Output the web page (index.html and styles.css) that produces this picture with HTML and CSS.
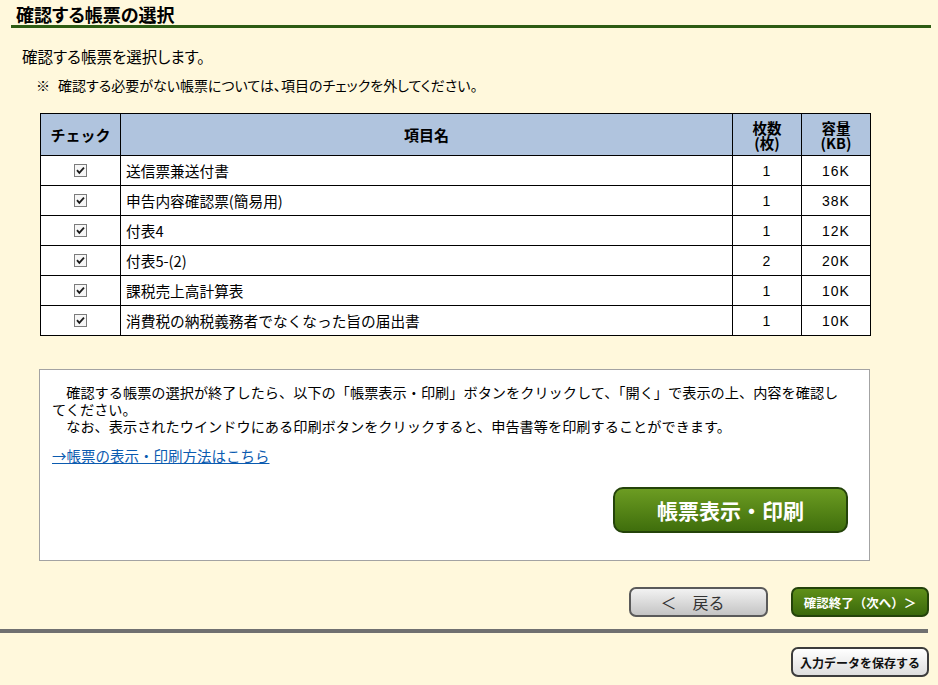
FILE: index.html
```html
<!DOCTYPE html>
<html lang="ja">
<head>
    <meta charset="UTF-8">
    <meta name="viewport" content="width=device-width, initial-scale=1.0">
    <title>確認する帳票の選択</title>
    <link rel="stylesheet" href="styles.css">
</head>
<body>
    <h1 class="page-title">確認する帳票の選択</h1>
    <p class="lead">確認する帳票を選択します。</p>
    <p class="note"><span class="mark">※</span>確認する必要がない帳票については、項目のチェックを外してください。</p>

    <table class="forms">
        <colgroup>
            <col class="col-check">
            <col class="col-name">
            <col class="col-count">
            <col class="col-size">
        </colgroup>
        <thead>
            <tr>
                <th>チェック</th>
                <th>項目名</th>
                <th class="two-line">枚数<br>(枚)</th>
                <th class="two-line">容量<br>(KB)</th>
            </tr>
        </thead>
        <tbody>
            <tr>
                <td class="check"><svg class="cb" width="13" height="13" viewBox="0 0 13 13"><rect x="0.5" y="0.5" width="12" height="12" fill="#f6f6f6" stroke="#7b7b7b"/><path d="M3 6.2 L5.3 8.8 L10 3.6" fill="none" stroke="#1a1a1a" stroke-width="1.8"/></svg></td>
                <td class="name">送信票兼送付書</td>
                <td class="num">1</td>
                <td class="num">16K</td>
            </tr>
            <tr>
                <td class="check"><svg class="cb" width="13" height="13" viewBox="0 0 13 13"><rect x="0.5" y="0.5" width="12" height="12" fill="#f6f6f6" stroke="#7b7b7b"/><path d="M3 6.2 L5.3 8.8 L10 3.6" fill="none" stroke="#1a1a1a" stroke-width="1.8"/></svg></td>
                <td class="name">申告内容確認票(簡易用)</td>
                <td class="num">1</td>
                <td class="num">38K</td>
            </tr>
            <tr>
                <td class="check"><svg class="cb" width="13" height="13" viewBox="0 0 13 13"><rect x="0.5" y="0.5" width="12" height="12" fill="#f6f6f6" stroke="#7b7b7b"/><path d="M3 6.2 L5.3 8.8 L10 3.6" fill="none" stroke="#1a1a1a" stroke-width="1.8"/></svg></td>
                <td class="name">付表4</td>
                <td class="num">1</td>
                <td class="num">12K</td>
            </tr>
            <tr>
                <td class="check"><svg class="cb" width="13" height="13" viewBox="0 0 13 13"><rect x="0.5" y="0.5" width="12" height="12" fill="#f6f6f6" stroke="#7b7b7b"/><path d="M3 6.2 L5.3 8.8 L10 3.6" fill="none" stroke="#1a1a1a" stroke-width="1.8"/></svg></td>
                <td class="name">付表5-(2)</td>
                <td class="num">2</td>
                <td class="num">20K</td>
            </tr>
            <tr>
                <td class="check"><svg class="cb" width="13" height="13" viewBox="0 0 13 13"><rect x="0.5" y="0.5" width="12" height="12" fill="#f6f6f6" stroke="#7b7b7b"/><path d="M3 6.2 L5.3 8.8 L10 3.6" fill="none" stroke="#1a1a1a" stroke-width="1.8"/></svg></td>
                <td class="name">課税売上高計算表</td>
                <td class="num">1</td>
                <td class="num">10K</td>
            </tr>
            <tr>
                <td class="check"><svg class="cb" width="13" height="13" viewBox="0 0 13 13"><rect x="0.5" y="0.5" width="12" height="12" fill="#f6f6f6" stroke="#7b7b7b"/><path d="M3 6.2 L5.3 8.8 L10 3.6" fill="none" stroke="#1a1a1a" stroke-width="1.8"/></svg></td>
                <td class="name">消費税の納税義務者でなくなった旨の届出書</td>
                <td class="num">1</td>
                <td class="num">10K</td>
            </tr>
        </tbody>
    </table>

    <div class="print-box">
        <p class="guide">　確認する帳票の選択が終了したら、以下の「帳票表示・印刷」ボタンをクリックして、「開く」で表示の上、内容を確認し<br>てください。<br>　なお、表示されたウインドウにある印刷ボタンをクリックすると、申告書等を印刷することができます。</p>
        <a href="#" class="help-link">→帳票の表示・印刷方法はこちら</a>
        <div class="print-row">
            <button class="btn-print">帳票表示・印刷</button>
        </div>
    </div>

    <div class="nav-row">
        <button class="btn-back">＜　戻る</button>
        <button class="btn-next">確認終了（次へ）＞</button>
    </div>
    <div class="rule"></div>
    <div class="save-row">
        <button class="btn-save">入力データを保存する</button>
    </div>
</body>
</html>
```
FILE: styles.css
```css
body {
    margin: 0;
    padding: 0;
    background-color: #fff8dc;
    color: #000;
    font-family: "Noto Sans CJK JP", sans-serif;
}
.page-title {
    margin: 0 7px 0 11px;
    padding: 3px 0 0 5px;
    font-size: 18px;
    line-height: 22px;
    font-weight: bold;
    font-feature-settings: "palt";
    border-bottom: 3px solid #2d5c13;
}
.lead {
    margin: 18px 0 0 22px;
    font-size: 15.5px;
    line-height: 20px;
    font-feature-settings: "palt";
}
.note {
    margin: 10px 0 0 36px;
    font-size: 14px;
    line-height: 18px;
    font-feature-settings: "palt";
}
.note .mark {
    margin-right: 8px;
}
.forms {
    margin: 19px 0 0 40px;
    width: 830px;
    table-layout: fixed;
    border-collapse: collapse;
    background-color: #fff;
}
.col-check { width: 80px; }
.col-name { width: 612px; }
.col-count { width: 69px; }
.col-size { width: 69px; }
.forms th,
.forms td {
    border: 1px solid #000;
    padding: 0;
}
.forms th {
    height: 41px;
    background-color: #b0c4de;
    font-size: 15px;
    font-weight: bold;
    text-align: center;
}
.forms th.two-line {
    font-size: 14.5px;
    line-height: 15px;
}
.forms td {
    height: 29px;
    font-size: 15px;
}
.forms td.check {
    text-align: center;
}
.forms td.check .cb {
    display: block;
    margin: 0 auto;
}
.forms td.name {
    padding-left: 5px;
    font-size: 14.7px;
}
.forms td.num {
    text-align: center;
    font-family: "Liberation Sans", sans-serif;
    font-size: 14px;
    letter-spacing: 1px;
}
.print-box {
    margin: 33px 0 0 39px;
    width: 805px;
    padding: 14px 12px 27px 12px;
    border: 1px solid #a3a3a3;
    background-color: #fff;
}
.guide {
    margin: 0;
    font-size: 14.2px;
    line-height: 17px;
}
.help-link {
    display: block;
    margin-top: 12px;
    font-size: 14.5px;
    line-height: 18px;
    color: #0b5bb0;
    text-decoration: underline;
}
.print-row {
    display: flex;
    justify-content: flex-end;
    margin-top: 22px;
    padding-right: 9px;
}
.btn-print {
    width: 235px;
    height: 46px;
    border: 2px solid #24430a;
    border-radius: 10px;
    background: linear-gradient(#6c9c22, #3f6e0c);
    color: #fff;
    font-family: "Noto Sans CJK JP", sans-serif;
    font-size: 21px;
    font-weight: bold;
    cursor: pointer;
}
.nav-row {
    display: flex;
    justify-content: flex-end;
    gap: 23px;
    margin: 26px 9px 0 0;
}
.btn-back,
.btn-next,
.btn-save {
    height: 30px;
    border-radius: 7px;
    font-family: "Noto Sans CJK JP", sans-serif;
    cursor: pointer;
    padding: 0;
}
.btn-back {
    width: 139px;
    padding-right: 12px;
    border: 2px solid #5a5a5a;
    background: linear-gradient(#f2f2f2, #c4c4c4);
    color: #333;
    font-size: 16px;
}
.btn-next {
    width: 138px;
    border: 2px solid #24430a;
    background: linear-gradient(#5f9019, #3b690b);
    color: #fff;
    font-size: 12.5px;
    font-weight: bold;
}
.rule {
    margin: 12px 10px 0 0;
    height: 4px;
    background-color: #707070;
}
.save-row {
    display: flex;
    justify-content: flex-end;
    margin: 14px 9px 0 0;
}
.btn-save {
    width: 138px;
    border: 2px solid #3c3c3c;
    background: linear-gradient(#ffffff, #dedede);
    color: #111;
    font-size: 12px;
    font-weight: bold;
}
```
